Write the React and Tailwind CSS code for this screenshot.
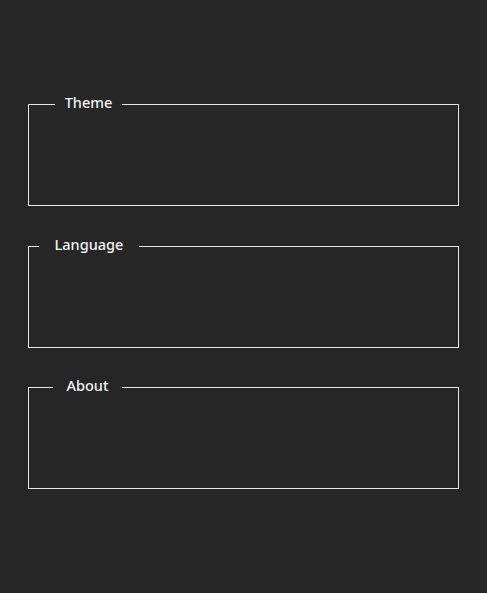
const sections = [
    { title: 'Theme', legend: 'ml-[26px] w-[67px]', gap: '' },
    { title: 'Language', legend: 'ml-[10px] w-[100px]', gap: 'mt-[28px]' },
    { title: 'About', legend: 'ml-[24px] w-[69px]', gap: 'mt-[27px]' },
];

const Section = ({ title, legend, gap }) => {
    return (
        <fieldset className={`${gap} border border-[#e8e8e8]`}>
            <legend className={`${legend} text-[14.5px] font-medium leading-[20px] pb-1 text-[#f2f2f2]`}>
                <span className="block text-center">{title}</span>
            </legend>
            <div className="h-[89px]"></div>
        </fieldset>
    );
};

export default function App() {
    return (
        <div
            className="min-h-[593px] bg-[#262626] px-[28px] pt-[92px] flex flex-col"
            style={{ fontFamily: '"Noto Sans", "Open Sans", sans-serif' }}
        >
            {sections.map((s) => (
                <Section key={s.title} {...s} />
            ))}
        </div>
    );
}
